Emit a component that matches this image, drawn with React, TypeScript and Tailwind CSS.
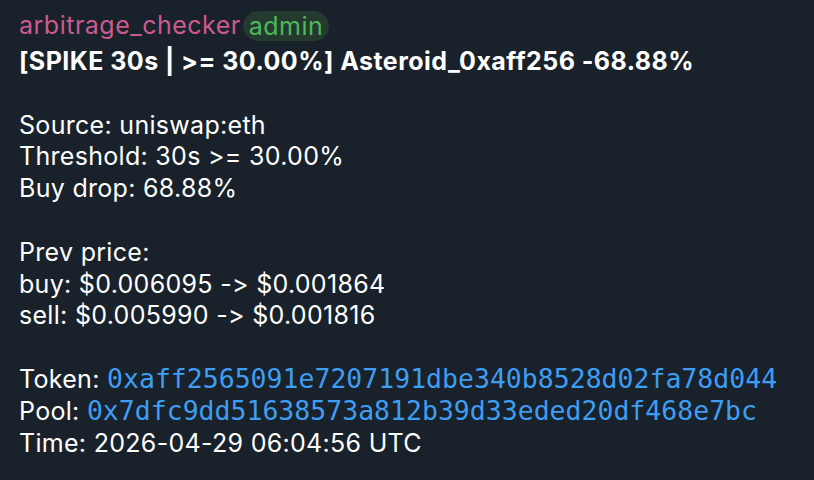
const sans = { fontFamily: 'Inter, "Noto Sans", sans-serif', fontFeatureSettings: '"calt" 0, "liga" 0' };

function Line({ children, bold }: { children?: React.ReactNode; bold?: boolean }) {
  return (
    <div
      className={`h-[31.8px] leading-[31.8px] whitespace-nowrap ${
        bold ? 'font-bold tracking-[0.45px]' : 'tracking-[0.3px]'
      }`}
    >
      {children}
    </div>
  );
}

function Mono({ children }: { children: React.ReactNode }) {
  return (
    <span className="font-['DejaVu_Sans_Mono',monospace] text-[26.5px] leading-none tracking-normal text-[#3d9ef2]">
      {children}
    </span>
  );
}

export default function App() {
  return (
    <div
      className="w-[814px] h-[480px] overflow-hidden bg-[#19212b] px-[19px] pt-[10px] text-[25px] text-white"
      style={sans}
    >
      {/* Sender */}
      <div className="flex items-center h-[31px] mb-[5px] tracking-[0.5px]">
        <span className="text-[#cd5a8f] leading-[31px]">arbitrage_checker</span>
        <span className="ml-[2px] rounded-full bg-[#253a2e] px-[6px] leading-[30px] text-[#4cb85a]">
          admin
        </span>
      </div>

      <Line bold>[SPIKE 30s | &gt;= 30.00%] Asteroid_0xaff256 -68.88%</Line>
      <Line />
      <Line>Source: uniswap:eth</Line>
      <Line>Threshold: 30s &gt;= 30.00%</Line>
      <Line>Buy drop: 68.88%</Line>
      <Line />
      <Line>Prev price:</Line>
      <Line>buy: $0.006095 -&gt; $0.001864</Line>
      <Line>sell: $0.005990 -&gt; $0.001816</Line>
      <Line />
      <Line>
        Token: <Mono>0xaff2565091e7207191dbe340b8528d02fa78d044</Mono>
      </Line>
      <Line>
        Pool: <Mono>0x7dfc9dd51638573a812b39d33eded20df468e7bc</Mono>
      </Line>
      <Line>Time: 2026-04-29 06:04:56 UTC</Line>
    </div>
  );
}
